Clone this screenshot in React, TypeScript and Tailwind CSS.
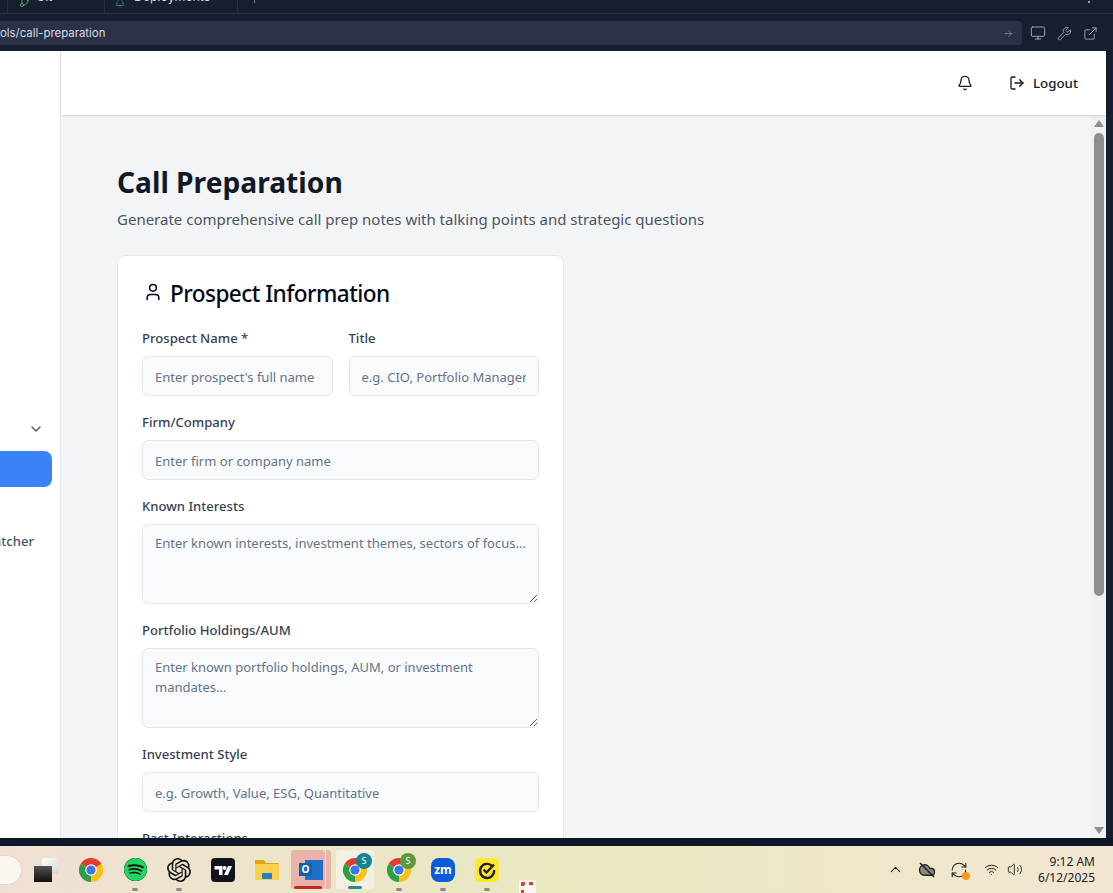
import type { ReactNode } from 'react'
import {
  ArrowRight, Bell, ChevronDown, ChevronUp, Cloud, ExternalLink, GitBranch, LogOut, Monitor,
  RefreshCw, TreePine, User, Volume2, Wifi, Wrench,
} from 'lucide-react'
import { SiOpenai, SiSpotify } from 'react-icons/si'

const inputCls =
  'w-full h-10 rounded-md border border-[#e2e8f0] bg-[#f8fafb] px-3 pt-[2px] text-[13px] text-[#0f172a] placeholder:text-[#64748b] outline-none'
const areaCls =
  'block w-full h-20 rounded-md border border-[#e2e8f0] bg-[#f8fafb] px-3 py-2 text-[13px] leading-5 text-[#0f172a] placeholder:text-[#64748b] outline-none'

function Field({ label, children }: { label: string; children: ReactNode }) {
  return (
    <div className="min-w-0">
      <label className="block text-[13.1px] leading-5 font-medium text-[#374151] mb-2">{label}</label>
      {children}
    </div>
  )
}

function ChromeLogo({ badge, badgeColor }: { badge: string; badgeColor: string }) {
  return (
    <div className="relative w-6 h-6">
      <svg viewBox="0 0 24 24" className="w-6 h-6">
        <path d="M12 12 L1.6 6 A12 12 0 0 1 22.4 6 Z" fill="#e33b2e" />
        <path d="M12 12 L22.4 6 A12 12 0 0 1 12 24 Z" fill="#fbc116" />
        <path d="M12 12 L12 24 A12 12 0 0 1 1.6 6 Z" fill="#2f9e44" />
        <circle cx="12" cy="12" r="5.8" fill="#fff" />
        <circle cx="12" cy="12" r="4.6" fill="#3b78e7" />
      </svg>
      {badge && (
        <span className={`absolute -top-[5px] -right-[5px] w-4 h-4 rounded-full text-[9px] leading-4 text-center text-white ${badgeColor}`}>
          {badge}
        </span>
      )}
    </div>
  )
}

function Slot({ children, dot, w = 'w-11' }: { children: ReactNode; dot?: boolean; w?: string }) {
  return (
    <div className={`relative ${w} h-full flex items-center justify-center shrink-0`}>
      {children}
      {dot && <span className="absolute bottom-[2px] left-1/2 -translate-x-1/2 w-[6px] h-[3px] rounded-full bg-[#8a8a80]" />}
    </div>
  )
}

function Taskbar() {
  return (
    <div className="relative h-[47px] shrink-0 flex items-center bg-gradient-to-r from-[#f0e0d4] via-[#e9e9c0] to-[#f3e6d2] font-['Noto_Sans',sans-serif]">
      <div className="w-[22px] h-[30px] rounded-r-full bg-[#fbf6f0] border border-[#e6d8cc] border-l-0 shrink-0" />
      <Slot w="w-[47px]">
        <div className="relative w-6 h-6">
          <div className="absolute right-0 top-0 w-4 h-4 bg-gradient-to-br from-white to-[#d8d8d8]" />
          <div className="absolute left-0 bottom-0 w-[18px] h-4 bg-gradient-to-b from-[#555] to-[#111]" />
        </div>
      </Slot>
      <Slot><ChromeLogo badge="" badgeColor="" /></Slot>
      <Slot dot>
        <span className="w-6 h-6 flex items-center justify-center"><SiSpotify size={23} color="#1ed760" style={{ background: '#111', borderRadius: 12 }} /></span>
      </Slot>
      <Slot dot><SiOpenai size={24} color="#111" /></Slot>
      <Slot>
        <svg viewBox="0 0 24 24" className="w-6 h-6">
          <rect width="24" height="24" rx="4" fill="#12141c" />
          <path d="M3.5 8h8v9h-3.5v-5.5h-4.5z" fill="#fff" />
          <circle cx="13.6" cy="10" r="2" fill="#fff" />
          <path d="M17 8h4l-4 9h-4z" fill="#fff" />
        </svg>
      </Slot>
      <Slot>
        <svg viewBox="0 0 24 24" className="w-6 h-6">
          <path d="M0 3a1 1 0 0 1 1-1h8l2 3h12a1 1 0 0 1 1 1v4H0z" fill="#e2a416" />
          <path d="M0 6h24v15a1 1 0 0 1-1 1H1a1 1 0 0 1-1-1z" fill="#fbd04c" />
          <rect x="7" y="15" width="10" height="6" rx="1" fill="#1f7fd0" />
        </svg>
      </Slot>
      <div className="relative w-[34px] h-[39px] rounded-[3px] bg-[#e9b3aa] flex items-center justify-center shrink-0 ml-[2px]">
        <div className="relative w-6 h-6 ml-[6px]">
          <div className="absolute right-0 top-[2px] w-[18px] h-5 bg-[#1f6fc4]" />
          <div className="absolute left-0 top-[5px] w-[13px] h-[13px] bg-[#0f62b4] text-white text-[10px] leading-[13px] text-center font-bold">O</div>
        </div>
        <span className="absolute bottom-0 left-[3px] right-[3px] h-[3px] rounded-full bg-[#c8281e]" />
      </div>
      <div className="w-[5px] h-[39px] ml-px rounded-r-[3px] bg-[#e9b3aa] shrink-0 mr-[5px]" />
      <div className="relative w-[38px] h-[39px] rounded-[3px] bg-[#f3f1e4] flex items-center justify-center shrink-0">
        <ChromeLogo badge="S" badgeColor="bg-[#13858f]" />
        <span className="absolute bottom-0 left-[12px] right-[12px] h-[3px] rounded-full bg-[#2d8595]" />
      </div>
      <Slot dot w="w-[50px]"><ChromeLogo badge="S" badgeColor="bg-[#5c9a3c]" /></Slot>
      <Slot dot w="w-[38px]">
        <span className="w-6 h-6 rounded-[8px] bg-[#0b5cdb] text-white text-[12px] leading-6 text-center font-bold">zm</span>
      </Slot>
      <Slot dot w="w-[50px]">
        <svg viewBox="0 0 24 24" className="w-6 h-6">
          <rect width="24" height="24" rx="5" fill="#fde82e" />
          <path d="M17.5 8.5A7 7 0 1 0 19 12" fill="none" stroke="#222" strokeWidth="2.4" />
          <path d="M8.5 11.5l3 3 7.5-8" fill="none" stroke="#222" strokeWidth="2.4" />
        </svg>
      </Slot>
      {/* half hidden app icon poking up from below the taskbar */}
      <div className="absolute left-[519px] top-[34px] w-[17px] h-[13px] bg-[#f8f7f2] rounded-t-[2px] p-[2px]">
        <div className="w-[12px] h-[12px] border-t-[3px] border-l-[3px] border-dotted border-[#d8432b]" />
      </div>

      <div className="ml-auto flex items-center h-full text-[#222]">
        <Slot w="w-[32px]"><ChevronUp size={17} strokeWidth={1.6} /></Slot>
        <Slot w="w-[32px]">
          <div className="relative w-[18px] h-[18px]">
            <Cloud size={18} strokeWidth={1.8} fill="#8a8a84" />
            <svg viewBox="0 0 18 18" className="absolute inset-0 w-[18px] h-[18px]">
              <path d="M2 2l14 14" stroke="#222" strokeWidth="1.6" />
            </svg>
          </div>
        </Slot>
        <Slot w="w-[32px]">
          <div className="relative">
            <RefreshCw size={18} strokeWidth={1.5} />
            <span className="absolute right-[-2px] bottom-[-1px] w-2 h-2 rounded-full bg-[#f79a16]" />
          </div>
        </Slot>
        <Slot w="w-[32px]"><Wifi size={15} strokeWidth={1.6} /></Slot>
        <Slot w="w-[16px]"><Volume2 size={17} strokeWidth={1.4} /></Slot>
        <div className="w-[72px] mr-[18px] text-right text-[12px] leading-4 text-[#222]">
          <div>9:12 AM</div>
          <div>6/12/2025</div>
        </div>
      </div>
    </div>
  )
}

function BrowserBar() {
  return (
    <div className="h-[51px] shrink-0 bg-[#171e30] text-[#d5d9e4] font-['Inter',sans-serif] overflow-hidden">
      <div className="h-[14px] border-b border-[#2a3040] flex items-end overflow-hidden relative">
        <div className="w-[8px] h-[14px] border-r border-[#2a3040]" />
        <div className="w-[97px] h-[14px] border-r border-[#2a3040] flex items-end gap-[5px] pl-[11px] pb-[8px] text-[12.3px] leading-4">
          <GitBranch size={12} className="text-[#4fa36a] shrink-0 translate-y-[3px]" />
          <span>Git</span>
        </div>
        <div className="w-[133px] h-[14px] border-r border-[#2a3040] flex items-end gap-[8px] pl-[9px] pb-[8px] text-[12.3px] leading-4">
          <TreePine size={12} className="text-[#2f7a50] shrink-0 translate-y-[3px]" />
          <span>Deployments</span>
        </div>
        <div className="w-px h-[5px] bg-[#777] ml-[16px] mb-[10px]" />
        <span className="ml-auto mr-[23px] mb-[10px] w-[2px] h-[2px] bg-[#ccc] rounded-full" />
      </div>
      <div className="flex items-center mt-[7px] h-6">
        <div className="w-[1022px] h-6 bg-[#2b3146] rounded-r-[4px] flex items-center text-[11.4px] overflow-hidden">
          <span className="flex-1 whitespace-nowrap pt-[2px]">ols/call-preparation</span>
          <ArrowRight size={11} className="text-[#7b8296] mr-[8px]" />
        </div>
        <div className="flex items-center text-[#9ea5b6]">
          <Monitor size={16} strokeWidth={1.5} className="ml-[8px]" />
          <Wrench size={15} strokeWidth={1.5} className="ml-[11px]" />
          <ExternalLink size={15} strokeWidth={1.5} className="ml-[11px]" />
        </div>
      </div>
    </div>
  )
}

export default function App() {
  return (
    <div className="h-[893px] w-[1113px] flex flex-col overflow-hidden bg-[#0d1526] font-['Noto_Sans',sans-serif]">
      <BrowserBar />

      <div className="h-[787px] shrink-0 flex pr-[7px] overflow-hidden bg-[#171e30]">
        {/* Sidebar, mostly scrolled out of the window */}
        <aside className="w-[61px] shrink-0 bg-white border-r border-[#e5e7eb] overflow-hidden pt-[370px]">
          <div className="flex justify-end pr-[16px]">
            <ChevronDown size={16} className="text-[#4b5563]" />
          </div>
          <div className="h-9 mt-[14px] mr-[8px] bg-[#3b82f6] rounded-r-lg" />
          <div className="mt-[44px] flex justify-end pr-[26px] text-[13.1px] leading-5 font-medium text-[#4b5563] whitespace-nowrap">
            Market Watcher
          </div>
        </aside>

        <div className="flex-1 min-w-0 flex flex-col">
          <header className="relative z-10 h-16 shrink-0 bg-white shadow-sm flex items-center justify-end pr-[28px]">
            <Bell size={16} className="text-[#111827] mr-[36px]" />
            <LogOut size={16} className="text-[#111827] mr-2" />
            <span className="text-[13.3px] font-medium text-[#111827] pt-[2px]">Logout</span>
          </header>

          <div className="flex-1 min-h-0 flex bg-[#f3f4f6]">
            <main className="flex-1 min-w-0 overflow-hidden pl-14 pt-[49px]">
              <h1 className="text-[28.2px] leading-9 font-bold text-[#111827]">Call Preparation</h1>
              <p className="mt-[7px] text-[15px] leading-6 text-[#4b5563]">
                Generate comprehensive call prep notes with talking points and strategic questions
              </p>

              <section className="mt-6 w-[447px] rounded-lg border border-[#e5e7eb] bg-white">
                <div className="p-6 flex items-center gap-[7px] text-[#020817]">
                  <User size={20} strokeWidth={1.8} className="ml-px" />
                  <h2 className="text-[22.6px] leading-6 font-medium tracking-tight translate-y-[2px]">Prospect Information</h2>
                </div>
                <div className="px-6 flex flex-col gap-4">
                  <div className="grid grid-cols-2 gap-4">
                    <Field label="Prospect Name *">
                      <input className={inputCls} placeholder="Enter prospect's full name" />
                    </Field>
                    <Field label="Title">
                      <input className={inputCls} placeholder="e.g. CIO, Portfolio Manager" />
                    </Field>
                  </div>
                  <Field label="Firm/Company">
                    <input className={inputCls} placeholder="Enter firm or company name" />
                  </Field>
                  <Field label="Known Interests">
                    <textarea className={areaCls} placeholder="Enter known interests, investment themes, sectors of focus..." />
                  </Field>
                  <Field label="Portfolio Holdings/AUM">
                    <textarea className={areaCls} placeholder="Enter known portfolio holdings, AUM, or investment mandates..." />
                  </Field>
                  <Field label="Investment Style">
                    <input className={inputCls} placeholder="e.g. Growth, Value, ESG, Quantitative" />
                  </Field>
                  <Field label="Past Interactions">
                    <textarea className={areaCls} placeholder="Enter notes from past interactions..." />
                  </Field>
                </div>
              </section>
            </main>

            {/* Scrollbar of the content pane */}
            <div className="w-[15px] shrink-0 bg-[#f1f1f1] flex flex-col items-center pt-[5px] pb-[4px]">
              <span className="w-0 h-0 border-x-[5px] border-x-transparent border-b-[7px] border-b-[#8f8f8f]" />
              <div className="w-[10px] h-[463px] mt-[6px] rounded-full bg-[#8f8f8f]" />
              <span className="mt-auto w-0 h-0 border-x-[5px] border-x-transparent border-t-[7px] border-t-[#8f8f8f]" />
            </div>
          </div>
        </div>
      </div>

      <div className="h-2 shrink-0 bg-[#0d1526]" />
      <Taskbar />
    </div>
  )
}
